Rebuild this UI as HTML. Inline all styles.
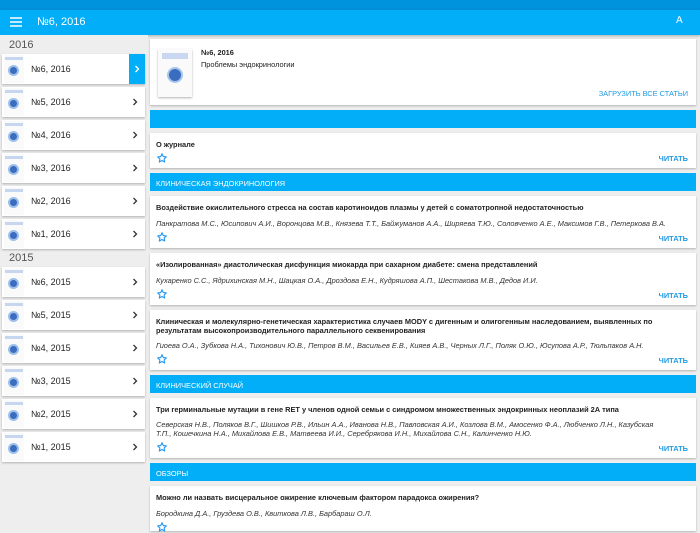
<!DOCTYPE html>
<html><head><meta charset="utf-8"><style>
*{margin:0;padding:0;box-sizing:border-box}
body{width:700px;height:525px;overflow:hidden;background:#eee;font-family:"Liberation Sans",sans-serif;position:relative}
.abs{position:absolute}
.sb{left:0;top:0;width:700px;height:10px;background:#0093dd}
.tb{left:0;top:10px;width:700px;height:25px;background:#02aef7;color:#fff;box-shadow:0 1px 3px rgba(0,0,0,.3)}
.left{left:0;top:35px;width:148px;height:490px;background:#eee}
.yr{left:9px;font-size:11px;color:#555}
.it{left:2px;width:143px;height:30px;background:#fff;box-shadow:0 1px 2px rgba(0,0,0,.25);font-size:9px;color:#222}
.it .t{position:absolute;left:29px;top:10px}
.it .ch{position:absolute;right:5px;top:10px}
.thumb{position:absolute;left:2px;top:1px;width:20px;height:28px;background:#fafafa}
.thumb i{position:absolute;left:4px;top:10px;width:11px;height:11px;border-radius:50%;background:#3a6cc0;border:2px solid #9cc0ea}
.thumb b{position:absolute;left:1px;top:2px;width:18px;height:3px;background:#c7d6ef}
.card{left:150px;width:546px;background:#fff;box-shadow:0 1px 2px rgba(0,0,0,.25);font-size:7.4px;color:#222}
.sec{left:150px;width:546px;height:18px;background:#02aef7;color:#fff;font-size:7.4px;padding:6px 6px}
.ti{position:absolute;left:6px;font-weight:bold}
.au{position:absolute;left:6px;font-style:italic;color:#333}
.star{position:absolute;left:6px}
.rd{position:absolute;right:8px;color:#1e9be6;font-size:7.4px;font-weight:bold}
</style></head><body>
<svg width="0" height="0" style="position:absolute"><defs>
<symbol id="st" viewBox="0 0 24 24"><path d="M12 3.5l2.6 5.6 6.1.7-4.5 4.2 1.2 6.1L12 17l-5.4 3.1 1.2-6.1-4.5-4.2 6.1-.7z" fill="none" stroke="#2196f3" stroke-width="2.2" stroke-linejoin="round"/></symbol>
<symbol id="cv" viewBox="0 0 10 10"><path d="M3.5 2l3 3-3 3" fill="none" stroke="#333" stroke-width="1.3"/></symbol>
</defs></svg>
<div class="abs sb"></div>
<div class="abs tb"><svg class="abs" style="left:10px;top:7px" width="12" height="10"><path d="M0 1h12M0 5h12M0 9h12" stroke="#fff" stroke-width="1.6"/></svg><div class="abs" style="left:37px;top:6px;font-size:11px">№6, 2016</div><div class="abs" style="left:676px;top:5px;font-size:10px">A</div></div>
<div class="abs left"></div>
<div class="abs yr" style="top:39px">2016</div>
<div class="abs it" style="top:54px"><div class="thumb"><b></b><i></i></div><span class="t">№6, 2016</span><div style="position:absolute;right:0;top:0;width:16px;height:30px;background:#02aef7"><svg style="position:absolute;left:3px;top:10px" width="10" height="10" viewBox="0 0 10 10"><path d="M3.5 2l3 3-3 3" fill="none" stroke="#fff" stroke-width="1.3"/></svg></div></div>
<div class="abs it" style="top:87px"><div class="thumb"><b></b><i></i></div><span class="t">№5, 2016</span><svg class="ch" width="10" height="10"><use href="#cv"/></svg></div>
<div class="abs it" style="top:120px"><div class="thumb"><b></b><i></i></div><span class="t">№4, 2016</span><svg class="ch" width="10" height="10"><use href="#cv"/></svg></div>
<div class="abs it" style="top:153px"><div class="thumb"><b></b><i></i></div><span class="t">№3, 2016</span><svg class="ch" width="10" height="10"><use href="#cv"/></svg></div>
<div class="abs it" style="top:186px"><div class="thumb"><b></b><i></i></div><span class="t">№2, 2016</span><svg class="ch" width="10" height="10"><use href="#cv"/></svg></div>
<div class="abs it" style="top:219px"><div class="thumb"><b></b><i></i></div><span class="t">№1, 2016</span><svg class="ch" width="10" height="10"><use href="#cv"/></svg></div>
<div class="abs yr" style="top:252px">2015</div>
<div class="abs it" style="top:267px"><div class="thumb"><b></b><i></i></div><span class="t">№6, 2015</span><svg class="ch" width="10" height="10"><use href="#cv"/></svg></div>
<div class="abs it" style="top:300px"><div class="thumb"><b></b><i></i></div><span class="t">№5, 2015</span><svg class="ch" width="10" height="10"><use href="#cv"/></svg></div>
<div class="abs it" style="top:333px"><div class="thumb"><b></b><i></i></div><span class="t">№4, 2015</span><svg class="ch" width="10" height="10"><use href="#cv"/></svg></div>
<div class="abs it" style="top:366px"><div class="thumb"><b></b><i></i></div><span class="t">№3, 2015</span><svg class="ch" width="10" height="10"><use href="#cv"/></svg></div>
<div class="abs it" style="top:399px"><div class="thumb"><b></b><i></i></div><span class="t">№2, 2015</span><svg class="ch" width="10" height="10"><use href="#cv"/></svg></div>
<div class="abs it" style="top:432px"><div class="thumb"><b></b><i></i></div><span class="t">№1, 2015</span><svg class="ch" width="10" height="10"><use href="#cv"/></svg></div>

<div class="abs card" style="top:39px;height:66px"><div style="position:absolute;left:8px;top:10px;width:34px;height:48px;background:#fafafa;box-shadow:0 1px 2px rgba(0,0,0,.3)"><div style="position:absolute;left:4px;top:4px;width:26px;height:6px;background:#c9d8f0"></div><div style="position:absolute;left:9px;top:18px;width:16px;height:16px;border-radius:50%;background:#3a6cc0;border:2px solid #a8c6ec"></div></div><span class="ti" style="left:51px;top:9px">№6, 2016</span><span style="position:absolute;left:51px;top:21px">Проблемы эндокринологии</span><span class="rd" style="bottom:7px;font-weight:normal">ЗАГРУЗИТЬ ВСЕ СТАТЬИ</span></div>
<div class="abs sec" style="top:110px"></div>
<div class="abs card" style="top:133px;height:35px"><span class="ti" style="top:7px">О журнале</span><svg class="star" style="top:19px" width="12" height="12"><use href="#st"/></svg><span class="rd" style="top:21px">ЧИТАТЬ</span></div>
<div class="abs sec" style="top:173px">КЛИНИЧЕСКАЯ ЭНДОКРИНОЛОГИЯ</div>
<div class="abs card" style="top:196px;height:52px"><span class="ti" style="top:7px">Воздействие окислительного стресса на состав каротиноидов плазмы у детей с соматотропной недостаточностью</span><span class="au" style="top:23px">Панкратова М.С., Юсипович А.И., Воронцова М.В., Князева Т.Т., Байжуманов А.А., Ширяева Т.Ю., Соловченко А.Е., Максимов Г.В., Петеркова В.А.</span><svg class="star" style="top:35px" width="12" height="12"><use href="#st"/></svg><span class="rd" style="top:38px">ЧИТАТЬ</span></div>
<div class="abs card" style="top:253px;height:52px"><span class="ti" style="top:7px">«Изолированная» диастолическая дисфункция миокарда при сахарном диабете: смена представлений</span><span class="au" style="top:23px">Кухаренко С.С., Ядрихинская М.Н., Шацкая О.А., Дроздова Е.Н., Кудряшова А.П., Шестакова М.В., Дедов И.И.</span><svg class="star" style="top:35px" width="12" height="12"><use href="#st"/></svg><span class="rd" style="top:38px">ЧИТАТЬ</span></div>
<div class="abs card" style="top:310px;height:60px"><span class="ti" style="top:7px;right:4px;line-height:9px">Клиническая и молекулярно-генетическая характеристика случаев MODY с дигенным и олигогенным наследованием, выявленных по результатам высокопроизводительного параллельного секвенирования</span><span class="au" style="top:31px">Гиоева О.А., Зубкова Н.А., Тихонович Ю.В., Петров В.М., Васильев Е.В., Кияев А.В., Черных Л.Г., Поляк О.Ю., Юсупова А.Р., Тюльпаков А.Н.</span><svg class="star" style="top:43px" width="12" height="12"><use href="#st"/></svg><span class="rd" style="top:46px">ЧИТАТЬ</span></div>
<div class="abs sec" style="top:375px">КЛИНИЧЕСКИЙ СЛУЧАЙ</div>
<div class="abs card" style="top:398px;height:60px"><span class="ti" style="top:7px">Три герминальные мутации в гене RET у членов одной семьи с синдромом множественных эндокринных неоплазий 2А типа</span><span class="au" style="top:22px;right:40px;line-height:9px">Северская Н.В., Поляков В.Г., Шишков Р.В., Ильин А.А., Иванова Н.В., Павловская А.И., Козлова В.М., Амосенко Ф.А., Любченко Л.Н., Казубская Т.П., Кошечкина Н.А., Михайлова Е.В., Матвеева И.И., Серебрякова И.Н., Михайлова С.Н., Калинченко Н.Ю.</span><svg class="star" style="top:43px" width="12" height="12"><use href="#st"/></svg><span class="rd" style="top:46px">ЧИТАТЬ</span></div>
<div class="abs sec" style="top:463px">ОБЗОРЫ</div>
<div class="abs card" style="top:486px;height:45px"><span class="ti" style="top:7px">Можно ли назвать висцеральное ожирение ключевым фактором парадокса ожирения?</span><span class="au" style="top:23px">Бородкина Д.А., Груздева О.В., Квиткова Л.В., Барбараш О.Л.</span><svg class="star" style="top:35px" width="12" height="12"><use href="#st"/></svg></div>
</body></html>
